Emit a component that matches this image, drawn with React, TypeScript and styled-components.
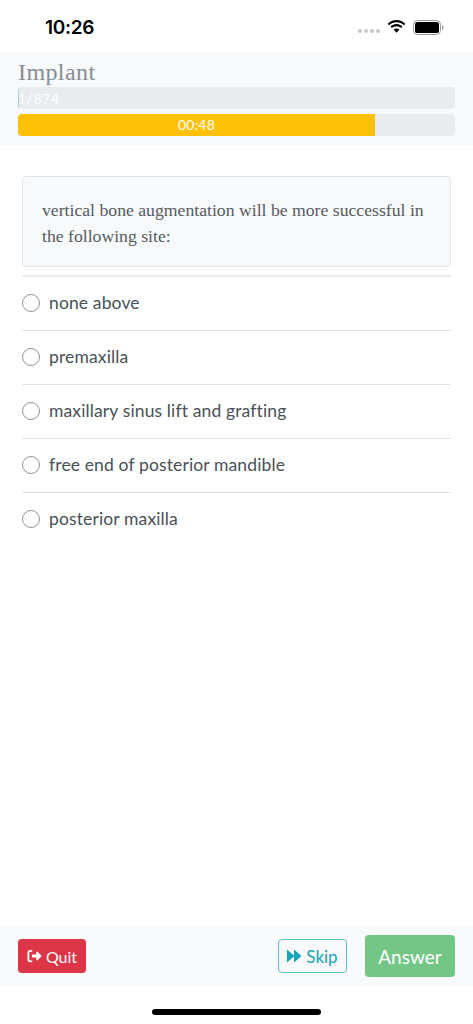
import React from "react";
import styled, { createGlobalStyle } from "styled-components";

const Global = createGlobalStyle`
  html, body { margin: 0; padding: 0; background: #fff; }
  * { box-sizing: border-box; }
`;
const sans = `"Lato", "Noto Sans", sans-serif`;

const Page = styled.div`
  width: 473px; height: 1024px; display: flex; flex-direction: column;
  background: #fff; font-family: ${sans}; overflow: hidden;
`;
const StatusBar = styled.div`
  height: 52px; flex: none; display: flex; align-items: center; justify-content: space-between;
  padding: 2px 29px 0 45px;
`;
const Time = styled.div`
  font-family: "Inter", sans-serif; font-weight: 600; font-size: 19px; color: #000; letter-spacing: -0.3px;
`;
const StatusIcons = styled.div`
  display: flex; align-items: center; gap: 7px;
`;
const SignalDots = styled.div`
  display: flex; gap: 1.5px; margin-top: 8px;
  i { width: 4.500px; height: 4.500px; border-radius: 50%; background: #c8c8c8; display: block; }
`;
const Header = styled.header`
  height: 93px; flex: none; background: #f8f9fa; padding: 6px 18px 0;
  display: flex; flex-direction: column;
`;
const Title = styled.h1`
  margin: 0; height: 29px; font-family: "Liberation Serif", serif; font-weight: 400;
  font-size: 24px; line-height: 29px; color: #868e96; letter-spacing: 0.4px;
`;
const Track = styled.div`
  height: 22px; margin-bottom: 5px; background: #e9ecef; border-radius: 4px; display: flex; overflow: hidden;
`;
const Fill = styled.div<{ $color: string; $width: string; $align: string }>`
  width: ${(p) => p.$width}; flex: none; background: ${(p) => p.$color}; color: #fff; font-size: 14px;
  line-height: 22px; white-space: nowrap; letter-spacing: 0.2px;
  display: flex; justify-content: ${(p) => p.$align};
`;
const ProgressLabel = styled.span`
  color: #fff; font-size: 14px; line-height: 24px; letter-spacing: 0.5px; opacity: 0.95;
`;
const Content = styled.main`
  flex: 1; padding: 31px 22px 0;
`;
const QuestionCard = styled.div`
  height: 91px; background: #f8f9fa; border: 1px solid #e2e6ea; border-radius: 4px;
  padding: 20px 18px 0 19px; font-family: "Liberation Serif", serif; font-size: 17.700px;
  line-height: 26px; color: #555b61;
`;
const Options = styled.div`
  margin-top: 8px; border-top: 2px solid #e9ecef;
`;
const Option = styled.div`
  height: 54px; display: flex; align-items: center; gap: 9px; border-top: 1px solid #dee2e6;
  font-size: 17.500px; letter-spacing: 0.13px; color: #495057; padding-bottom: 2px;
  &:first-child { border-top: 0; height: 53px; }
`;
const Radio = styled.span`
  width: 18px; height: 18px; border: 1px solid #8d959c; border-radius: 50%; background: #fff; flex: none;
`;
const Footer = styled.footer`
  height: 60px; flex: none; background: #f8f9fa; padding: 0 18px; display: flex; align-items: center; gap: 18px;
`;
const Button = styled.button<{ $bg: string; $color: string; $border: string; $w: number; $h: number; $size: number }>`
  width: ${(p) => p.$w}px; height: ${(p) => p.$h}px; background: ${(p) => p.$bg}; color: ${(p) => p.$color};
  border: ${(p) => (p.$border === "none" ? "none" : `1.5px solid ${p.$border}`)}; border-radius: 4px;
  font-family: ${sans}; font-size: ${(p) => p.$size}px; padding: 0;
  display: flex; align-items: center; justify-content: center; gap: 4px; flex: none;
`;
const Spacer = styled.div`
  flex: 1;
`;
const HomeArea = styled.div`
  height: 38px; flex: none; display: flex; justify-content: center; padding-top: 23px;
`;
const HomeBar = styled.div`
  width: 169px; height: 6px; background: #000; border-radius: 3px;
`;

const options = [
  "none above",
  "premaxilla",
  "maxillary sinus lift and grafting",
  "free end of posterior mandible",
  "posterior maxilla",
];

export default function App() {
  return (
    <Page>
      <Global />
      <StatusBar>
        <Time>10:26</Time>
        <StatusIcons>
          <SignalDots><i /><i /><i /><i /></SignalDots>
          <svg width="19" height="14" viewBox="0 0 19 14">
            <path d="M9.500 2.200c2.900 0 5.500 1.100 7.400 3l1.400-1.500C16 1.400 12.900 0 9.500 0S3 1.400.7 3.700l1.400 1.500c1.900-1.900 4.500-3 7.400-3z" fill="#000" />
            <path d="M9.500 6.300c1.700 0 3.300.7 4.500 1.800l1.500-1.500C14 5 11.900 4.100 9.500 4.100S5 5 3.500 6.600L5 8.100c1.200-1.100 2.800-1.800 4.500-1.800z" fill="#000" />
            <path d="M9.500 8.400c-1.100 0-2.100.4-2.900 1.100l2.900 3.200 2.900-3.200c-.8-.7-1.800-1.100-2.900-1.100z" fill="#000" />
          </svg>
          <svg width="31" height="15" viewBox="0 0 31 15">
            <rect x="0.500" y="0.500" width="27" height="14" rx="4" fill="none" stroke="#9a9a9a" />
            <rect x="2" y="2" width="24" height="11" rx="2.600" fill="#000" />
            <path d="M29 5v5c.9-.3 1.500-1.400 1.500-2.500S29.900 5.300 29 5z" fill="#9a9a9a" />
          </svg>
        </StatusIcons>
      </StatusBar>
      <Header>
        <Title>Implant</Title>
        <Track>
          <Fill $color="#a5cdf5" $width="1px" $align="flex-start"><ProgressLabel>1/874</ProgressLabel></Fill>
        </Track>
        <Track>
          <Fill $color="#ffc107" $width="357px" $align="center">00:48</Fill>
        </Track>
      </Header>
      <Content>
        <QuestionCard>vertical bone augmentation will be more successful in the following site:</QuestionCard>
        <Options>
          {options.map((o) => (
            <Option key={o}><Radio />{o}</Option>
          ))}
        </Options>
      </Content>
      <Footer>
        <Button $bg="#dc3545" $color="#fff" $border="none" $w={68} $h={34} $size={16}>
          <svg width="15" height="14" viewBox="0 0 512 512" fill="#fff">
            <path d="M502.600 278.600a32 32 0 0 0 0-45.200l-128-128A32 32 0 0 0 320 128v72H192a32 32 0 0 0-32 32v48a32 32 0 0 0 32 32h128v72a32 32 0 0 0 54.600 22.600zM160 96a16 16 0 0 0 16-16V48a16 16 0 0 0-16-16H96a96 96 0 0 0-96 96v256a96 96 0 0 0 96 96h64a16 16 0 0 0 16-16v-32a16 16 0 0 0-16-16H96a32 32 0 0 1-32-32V128a32 32 0 0 1 32-32z" />
          </svg>
          Quit
        </Button>
        <Spacer />
        <Button $bg="transparent" $color="#17a2b8" $border="#5cbccb" $w={69} $h={34} $size={17}>
          <svg width="15" height="14" viewBox="0 0 15 14" fill="#17a2b8">
            <path d="M0 0.500 L7.500 7 L0 13.500Z M7 0.500 L14.500 7 L7 13.500Z" />
          </svg>
          Skip
        </Button>
        <Button $bg="#74c687" $color="#fff" $border="none" $w={90} $h={42} $size={19}>Answer</Button>
      </Footer>
      <HomeArea><HomeBar /></HomeArea>
    </Page>
  );
}
